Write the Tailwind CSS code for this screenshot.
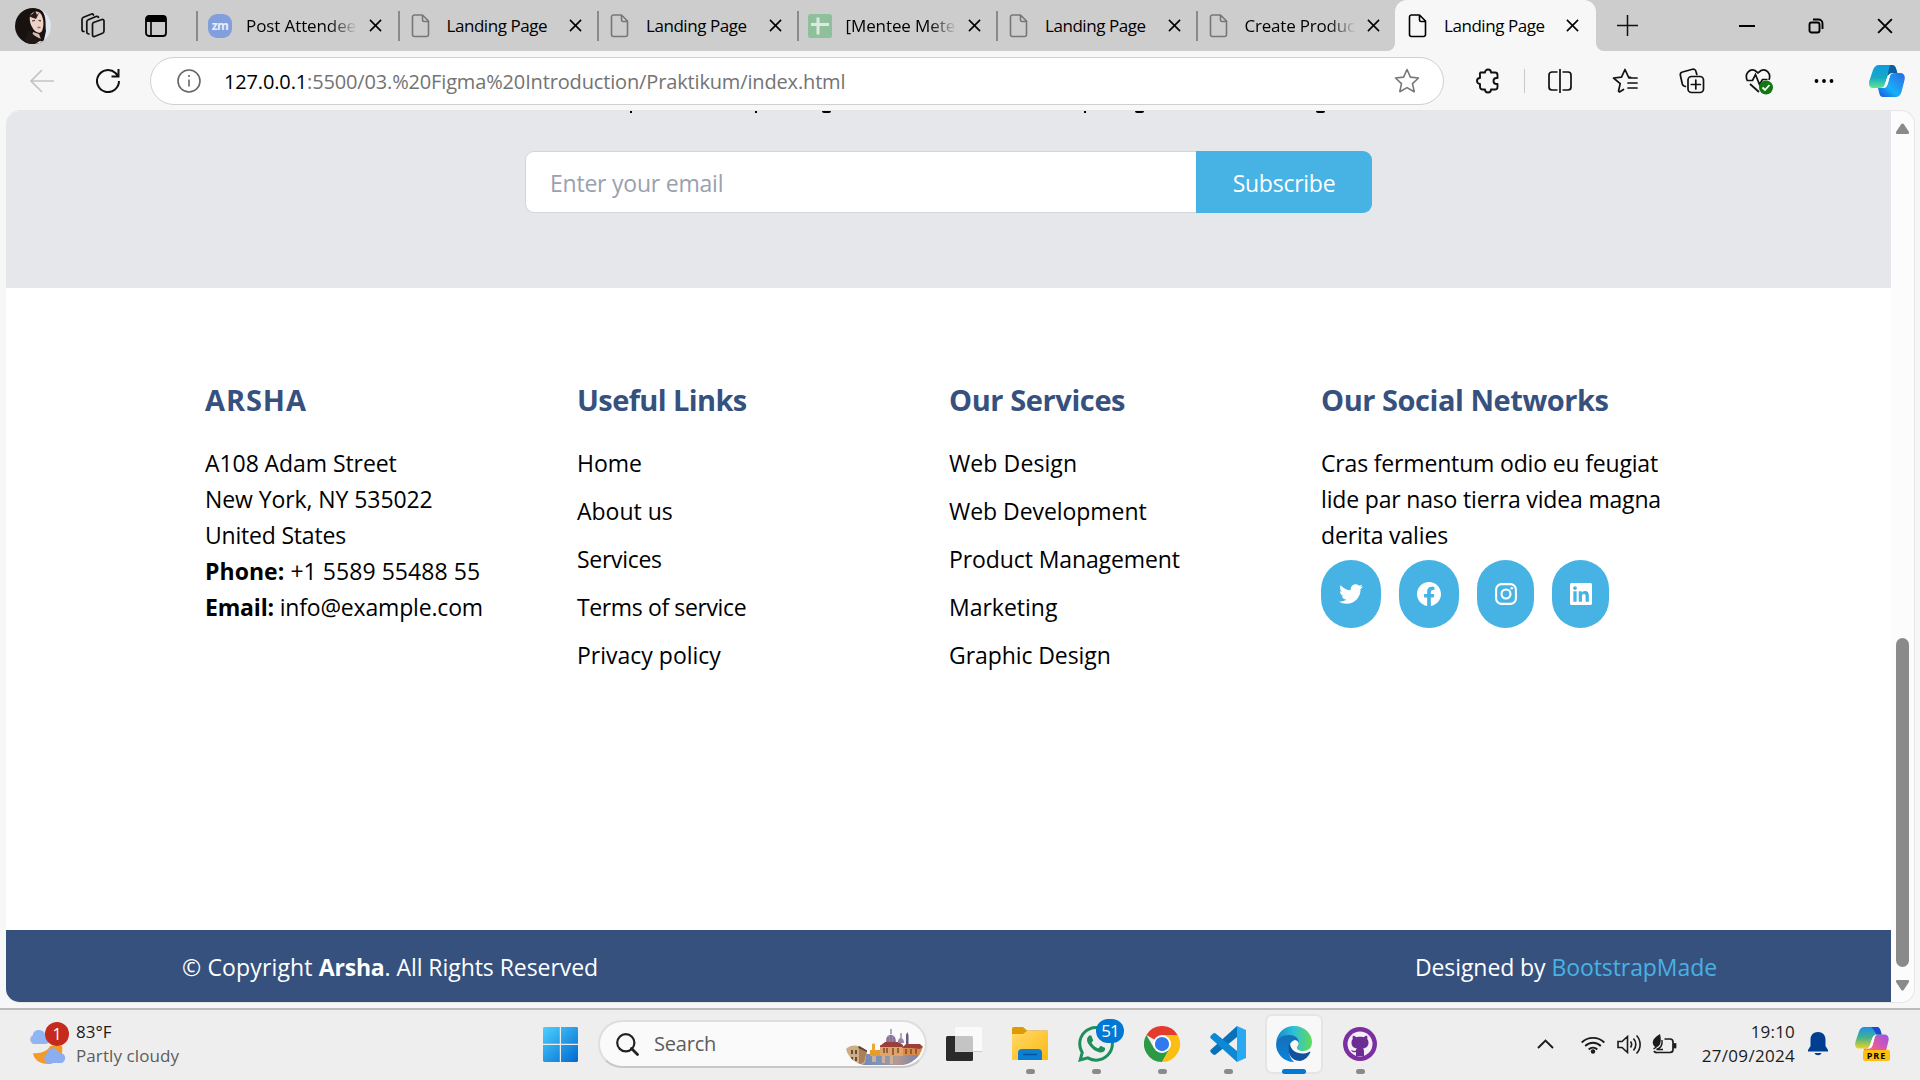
<!DOCTYPE html>
<html lang="en">
<head>
<meta charset="utf-8">
<title>Landing Page</title>
<script src="https://cdn.jsdelivr.net/npm/@tailwindcss/browser@4"></script>
</head>
<body class="w-[1920px] h-[1080px] overflow-hidden bg-[#f7f7f7] font-['Open_Sans','Noto_Sans',sans-serif] text-black flex flex-col">
<svg class="hidden">
  <symbol id="doc" viewBox="0 0 24 24"><path d="M5.500 1h8l6 6v13.500a2 2 0 0 1-2 2h-12a2 2 0 0 1-2-2v-17.500a2 2 0 0 1 2-2zM13.500 1v5a1.500 1.500 0 0 0 1.500 1.500h4.500" fill="none" stroke="currentColor" stroke-width="1.600" stroke-linejoin="round"/></symbol>
  <symbol id="x" viewBox="0 0 14 14"><path d="M1 1l12 12M13 1L1 13" fill="none" stroke="currentColor" stroke-width="1.700"/></symbol>
</svg>

<!-- Tab strip -->
<header class="h-[51px] shrink-0 bg-[#cdcdcd] flex items-stretch text-[17px] tracking-[-0.45px]">
  <div class="w-[196px] flex items-center pl-[15px] shrink-0">
    <svg class="w-9 h-9" viewBox="0 0 36 36"><defs><clipPath id="av"><circle cx="18" cy="18" r="18"/></clipPath></defs><g clip-path="url(#av)"><rect width="36" height="36" fill="#dfe5ed"/><path d="M0 36V10C5-1 20-3 27 3c5 6 3 14 4 20l-3 13z" fill="#17110f"/><path d="M15 8c2-5 8-6 11-2 3 5 3 12 1 17-2 3-5 2-8-1-3-4-5-9-4-14z" fill="#ecd3c8"/><path d="M13 8c4-1 6-3 7-6l2 5 3-4-4 8z" fill="#2a1d19"/><path d="M18 24l6 2 2 5-6 4h-5z" fill="#d9bcb0"/><path d="M14 22c4 5 8 8 14 9l-1 5H8z" fill="#211715"/><path d="M20 36l5-3 5 1v2z" fill="#eeeef0"/><path d="M17 13l3-.500M23.500 12.500l2.500.3" stroke="#4a2c27" stroke-width="1.200"/><path d="M22.500 19.500h3" stroke="#c4544f" stroke-width="1.500"/></g></svg>
    <svg class="w-[26px] h-[26px] ml-[29px]" viewBox="0 0 26 26" fill="none" stroke="#111" stroke-width="1.700" stroke-linejoin="round" stroke-linecap="round"><path d="M13.500 9.500l8.500-3a1.500 1.500 0 0 1 2 1.500v10a2.500 2.500 0 0 1-1.500 2.300l-8 3.200a1.500 1.500 0 0 1-2-1.500V11.500a2.200 2.200 0 0 1 1-2z"/><path d="M9 21a2 2 0 0 1-2.200-2V9a2.500 2.500 0 0 1 1.500-2.300L16 3.500a2 2 0 0 1 2.500.8M4 18.500a2 2 0 0 1-2-2V6.500A2.500 2.500 0 0 1 3.500 4.200L11 1.200a2 2 0 0 1 2.500.8"/></svg>
    <svg class="w-[22px] h-[22px] ml-[39px]" viewBox="0 0 22 22"><rect x="1" y="1" width="20" height="20" rx="3" fill="none" stroke="#000" stroke-width="1.800"/><path d="M1 7V4a3 3 0 0 1 3-3h14a3 3 0 0 1 3 3v3z"/><path d="M6 7v14" stroke="#000" stroke-width="1.600"/></svg>
  </div>

  <div class="w-[201.500px] shrink-0 flex items-center pr-[16px]"><i class="w-0.5 h-[30px] bg-[#8b8b8b]"></i><svg class="w-6 h-6 ml-[10px]" viewBox="0 0 24 24"><rect width="24" height="24" rx="9" fill="#829fdd"/><text x="12" y="15.500" text-anchor="middle" font-size="12" font-weight="700" fill="#e8eefb" font-family="Open Sans">zm</text></svg><span class="ml-[14px] w-[111px] tracking-[-0.1px] overflow-hidden whitespace-nowrap bg-gradient-to-r from-black from-75% to-transparent bg-clip-text text-transparent">Post Attendee</span><svg class="w-[13px] h-[13px] ml-auto"><use href="#x"/></svg></div>
  <div class="w-[199.500px] shrink-0 flex items-center pr-[15px]"><i class="w-0.5 h-[30px] bg-[#8b8b8b]"></i><svg class="w-6 h-6 ml-[9px] text-[#777]"><use href="#doc"/></svg><span class="ml-[14px] w-[111px] whitespace-nowrap">Landing Page</span><svg class="w-[13px] h-[13px] ml-auto"><use href="#x"/></svg></div>
  <div class="w-[199.500px] shrink-0 flex items-center pr-[15px]"><i class="w-0.5 h-[30px] bg-[#8b8b8b]"></i><svg class="w-6 h-6 ml-[9px] text-[#777]"><use href="#doc"/></svg><span class="ml-[14px] w-[111px] whitespace-nowrap">Landing Page</span><svg class="w-[13px] h-[13px] ml-auto"><use href="#x"/></svg></div>
  <div class="w-[199.500px] shrink-0 flex items-center pr-[15px]"><i class="w-0.5 h-[30px] bg-[#8b8b8b]"></i><svg class="w-6 h-6 ml-[9px]" viewBox="0 0 24 24"><rect width="24" height="24" rx="2.500" fill="#8fc09c"/><path d="M3 10.500h18M10 3.500v17" stroke="#dde8df" stroke-width="3"/></svg><span class="ml-[14px] w-[111px] tracking-[-0.1px] overflow-hidden whitespace-nowrap bg-gradient-to-r from-black from-75% to-transparent bg-clip-text text-transparent">[Mentee Mete</span><svg class="w-[13px] h-[13px] ml-auto"><use href="#x"/></svg></div>
  <div class="w-[199.500px] shrink-0 flex items-center pr-[15px]"><i class="w-0.5 h-[30px] bg-[#8b8b8b]"></i><svg class="w-6 h-6 ml-[9px] text-[#777]"><use href="#doc"/></svg><span class="ml-[14px] w-[111px] whitespace-nowrap">Landing Page</span><svg class="w-[13px] h-[13px] ml-auto"><use href="#x"/></svg></div>
  <div class="w-[199.500px] shrink-0 flex items-center pr-[15px]"><i class="w-0.5 h-[30px] bg-[#8b8b8b]"></i><svg class="w-6 h-6 ml-[9px] text-[#777]"><use href="#doc"/></svg><span class="ml-[14px] w-[111px] tracking-[-0.2px] overflow-hidden whitespace-nowrap bg-gradient-to-r from-black from-75% to-transparent bg-clip-text text-transparent">Create Produc</span><svg class="w-[13px] h-[13px] ml-auto"><use href="#x"/></svg></div>
  <div class="relative w-[201px] shrink-0 flex items-center pl-[11px] pr-[17px] bg-[#f7f7f7] rounded-t-[12px]">
    <svg class="absolute -left-2 bottom-0 w-2 h-2" viewBox="0 0 8 8"><path d="M8 0v8H0a8 8 0 0 0 8-8z" fill="#f7f7f7"/></svg>
    <svg class="absolute -right-2 bottom-0 w-2 h-2" viewBox="0 0 8 8"><path d="M0 0v8h8a8 8 0 0 1-8-8z" fill="#f7f7f7"/></svg>
    <svg class="w-6 h-6 text-black"><use href="#doc"/></svg><span class="ml-[14px] w-[111px] whitespace-nowrap">Landing Page</span><svg class="w-[13px] h-[13px] ml-auto"><use href="#x"/></svg></div>
  <svg class="w-[21px] h-[21px] ml-[21px] self-center" viewBox="0 0 21 21"><path d="M10.500 0v21M0 10.500h21" stroke="#111" stroke-width="1.500"/></svg>
  <div class="ml-auto flex items-center pr-[27px]">
    <i class="w-4 h-0.5 bg-black mr-[53px]"></i>
    <svg class="w-4 h-4 mr-[53px]" viewBox="0 0 16 16" fill="none" stroke="#000" stroke-width="1.900"><rect x="1.500" y="4.500" width="10" height="10" rx="2"/><path d="M5 1.500h5.500a4 4 0 0 1 4 4V11"/></svg>
    <svg class="w-4 h-4"><use href="#x"/></svg>
  </div>
</header>

<!-- Toolbar -->
<div class="h-[59px] shrink-0 flex items-center pt-[2px] pb-[1px]">
  <svg class="w-6 h-6 ml-[30px]" viewBox="0 0 24 24" fill="none" stroke="#c3c3c3" stroke-width="1.700"><path d="M24 12H1M12 1L1 12l11 11"/></svg>
  <svg class="w-6 h-6 ml-[42px]" viewBox="0 0 24 24" fill="none" stroke="#111" stroke-width="2"><path d="M23 12A11 11 0 1 1 19.500 4L22 7M22.500 0v7.500H15.500"/></svg>
  <div class="w-[1294px] h-12 ml-[30px] rounded-full border border-[#d0d0d0] bg-white flex items-center pl-[26px] pr-[23px]">
    <svg class="w-6 h-6" viewBox="0 0 24 24" fill="none" stroke="#666" stroke-width="1.600"><circle cx="12" cy="12" r="11"/><path d="M12 10.500v7M12 6v2"/></svg>
    <span class="ml-[23px] pt-px text-[20px] tracking-[-0.15px] text-[#737373] whitespace-nowrap"><span class="text-black">127.0.0.1</span>:5500/03.%20Figma%20Introduction/Praktikum/index.html</span>
    <svg class="w-[26px] h-[26px] ml-auto" viewBox="0 0 26 26" fill="none" stroke="#777" stroke-width="1.600" stroke-linejoin="round"><path d="M13 1.500l3.400 7.600 8.100.9-6 5.600 1.700 8.100L13 19.600l-7.200 4.100 1.700-8.100-6-5.600 8.100-.9z"/></svg>
  </div>
  <svg class="w-[26px] h-[26px] ml-[31px]" viewBox="0 0 26 26" fill="none" stroke="#111" stroke-width="1.900" stroke-linejoin="round"><path d="M5.500 4.500H10a3 3 0 1 1 6 0h4a2.500 2.500 0 0 1 2.500 2.500v3h-1a3 3 0 1 0 0 6h1v3a2.500 2.500 0 0 1-2.500 2.500h-4a3 3 0 1 1-6 0H7.500A2.500 2.500 0 0 1 5 19v-3a3 3 0 1 1 0-6V7a2.500 2.500 0 0 1 .5-2.500z"/></svg>
  <i class="w-px h-6 bg-[#c8c8c8] ml-[23px]"></i>
  <svg class="w-6 h-6 ml-[23px]" viewBox="0 0 24 24" fill="none" stroke="#111" stroke-width="1.700"><path d="M9.500 3H4a3 3 0 0 0-3 3v12a3 3 0 0 0 3 3h5.500M14.500 3H20a3 3 0 0 1 3 3v12a3 3 0 0 1-3 3h-5.500M12 0v24"/></svg>
  <svg class="w-[26px] h-[26px] ml-[40px]" viewBox="0 0 26 26" fill="none" stroke="#111" stroke-width="1.700" stroke-linejoin="round" stroke-linecap="round"><path d="M11.500 21.500L7.500 24l-1-.800 1.700-7.600-6.700-5.600 8-.9L13 1.500l3.500 7.600 2 .300M17 10h8M16 15h9M16 20h9"/></svg>
  <svg class="w-[26px] h-[26px] ml-[41px]" viewBox="0 0 26 26" fill="none" stroke="#111" stroke-width="1.700"><rect x="9" y="8.500" width="15.500" height="16" rx="3.500"/><path d="M16.800 12v9M12.300 16.500h9M6.500 18.500L5 18A3 3 0 0 1 3.300 16L1.300 7A2.800 2.800 0 0 1 3.500 4L13.500 1.300A2.800 2.800 0 0 1 17 3.500l.8 3" stroke-linecap="round"/></svg>
  <svg class="w-[28px] h-[28px] ml-[40px]" viewBox="0 0 28 28" fill="none" stroke="#111" stroke-width="1.700"><path d="M2 13C-.500 6 5 1.500 10 3.500l3 2.500 3-2.500c5-2 10.500 2.500 8 9.500M1.500 13.500h6l3-6 4 10 3-5h5M5 17l9 8"/><circle cx="21" cy="20.500" r="7" fill="#117811" stroke="none"/><path d="M17.500 20.500l2.500 2.500 4.500-5" stroke="#fff" stroke-width="1.800"/></svg>
  <svg class="w-[20px] h-[6px] ml-[41px]" viewBox="0 0 20 6"><circle cx="2.500" cy="3" r="1.900"/><circle cx="10" cy="3" r="1.900"/><circle cx="17.500" cy="3" r="1.900"/></svg>
  <svg class="w-9 h-8 ml-[35px]" viewBox="0 0 36 32"><defs><linearGradient id="cpa" x1="0" y1="0" x2="0" y2="1"><stop stop-color="#0e9be0"/><stop offset=".55" stop-color="#18a9c4"/><stop offset="1" stop-color="#5ee58e"/></linearGradient><linearGradient id="cpb" x1="1" y1="0" x2="0" y2="1"><stop stop-color="#2a6ae0"/><stop offset=".6" stop-color="#18b0fa"/><stop offset="1" stop-color="#1750d8"/></linearGradient></defs><path d="M26 8h5c4 0 5.500 3 4.500 7l-3 12c-1 3-3 5-6 5H14c-3 0-3.500-3-4-5l-1-4h5c3 0 4-2 5-5l2-7c.7-2 2-3 5-3z" fill="url(#cpb)"/><path d="M10 0h13c3 0 4 3 4.500 5l.8 3H23c-3 0-4 2-5 5l-2 6c-1 3-2 4-5 4H4c-3.500 0-4.500-3-3.700-7L4 5c1-3 3-5 6-5z" fill="url(#cpa)"/><path d="M21 0h2c3 0 4 3 4.500 5l.8 3H23c-2 0-3 1-4 3 0-4 1-8 2-11z" fill="#0d5f9e"/><path d="M21 9.500c-2 .5-2.500 2-3 3.500l-2 6c-1 3-2 4-4.500 4H14c3 0 4-2 5-5z" fill="#fff"/></svg>
</div>

<!-- Page viewport -->
<div class="h-[893px] ml-[6px] mr-[5px] shrink-0 flex rounded-[14px] overflow-hidden bg-[#fcfcfc] border-y border-r border-[#e6e6e6]">
  <main class="w-[1885px] flex flex-col bg-white text-[23px] leading-9">
    <section class="h-[177px] shrink-0 bg-[#e5e7eb] relative">
      <!-- Descenders of the line scrolled under the toolbar -->
      <i class="absolute left-[624px] top-0 w-[2px] h-[2px] bg-black"></i><i class="absolute left-[749px] top-0 w-[2px] h-[2px] bg-black"></i><i class="absolute left-[816px] top-0 w-[9px] h-[2px] rounded-b-full bg-black"></i><i class="absolute left-[1078px] top-0 w-[2px] h-[2px] bg-black"></i><i class="absolute left-[1129px] top-0 w-[9px] h-[2px] rounded-b-full bg-black"></i><i class="absolute left-[1310px] top-0 w-[9px] h-[2px] rounded-b-full bg-black"></i>
      <div class="flex h-full pt-[40px] pl-[519px] pb-[75px]">
        <div class="w-[671px] border border-r-0 border-gray-300 bg-white rounded-l-[9px] flex items-center pt-[2px] pl-6 text-gray-400"><span class="tracking-[-0.22px]">Enter your email</span></div>
        <div class="w-[176px] bg-[#47b2e4] rounded-r-[9px] flex items-center justify-center pt-[2px] text-white"><span class="tracking-[-0.25px]">Subscribe</span></div>
      </div>
    </section>
    <section class="grow grid grid-cols-[372px_372px_372px_372px] pl-[199px] pt-[91px]">
      <div><h3 class="text-[29px] leading-[42px] font-bold text-[#37517e] mb-6 tracking-[0.9px]">ARSHA</h3>
        <p class="tracking-[-0.07px]">A108 Adam Street</p><p class="tracking-[-0.08px]">New York, NY 535022</p><p class="tracking-[-0.2px]">United States</p><p class="tracking-[0.05px]"><b>Phone:</b> +1 5589 55488 55</p><p class="tracking-[-0.18px]"><b>Email:</b> info@example.com</p></div>
      <div><h3 class="text-[29px] leading-[42px] font-bold text-[#37517e] mb-6 tracking-[-0.6px]">Useful Links</h3>
        <ul class="flex flex-col gap-3"><li>Home</li><li>About us</li><li class="tracking-[-0.3px]">Services</li><li class="tracking-[-0.38px]">Terms of service</li><li>Privacy policy</li></ul></div>
      <div><h3 class="text-[29px] leading-[42px] font-bold text-[#37517e] mb-6 tracking-[-0.4px]">Our Services</h3>
        <ul class="flex flex-col gap-3"><li class="tracking-[0.1px]">Web Design</li><li class="tracking-[-0.05px]">Web Development</li><li class="tracking-[-0.1px]">Product Management</li><li>Marketing</li><li class="tracking-[-0.08px]">Graphic Design</li></ul></div>
      <div><h3 class="text-[29px] leading-[42px] font-bold text-[#37517e] mb-6 tracking-[-0.45px]">Our Social Networks</h3>
        <p class="tracking-[-0.17px]">Cras fermentum odio eu feugiat</p><p class="tracking-[-0.17px]">lide par naso tierra videa magna</p><p class="tracking-[-0.15px]">derita valies</p>
        <div class="flex gap-[18px] mt-[7px] text-white">
          <a class="w-[60px] h-[68px] rounded-full bg-[#47b2e4] flex items-center justify-center"><svg class="w-6 h-6" viewBox="0 0 512 512" fill="currentColor"><path d="M459.370 151.716c.325 4.548.325 9.097.325 13.645 0 138.720-105.583 298.558-298.558 298.558-59.452 0-114.680-17.219-161.137-47.106 8.447.974 16.568 1.299 25.340 1.299 49.055 0 94.213-16.568 130.274-44.832-46.132-.975-84.792-31.188-98.112-72.772 6.498.974 12.995 1.624 19.818 1.624 9.421 0 18.843-1.300 27.614-3.573-48.081-9.747-84.143-51.980-84.143-102.985v-1.299c13.969 7.797 30.214 12.670 47.431 13.319-28.264-18.843-46.781-51.005-46.781-87.391 0-19.492 5.197-37.360 14.294-52.954 51.655 63.675 129.300 105.258 216.365 109.807-1.624-7.797-2.599-15.918-2.599-24.040 0-57.828 46.782-104.934 104.934-104.934 30.213 0 57.502 12.670 76.670 33.137 23.715-4.548 46.456-13.320 66.599-25.340-7.798 24.366-24.366 44.833-46.132 57.827 21.117-2.273 41.584-8.122 60.426-16.243-14.292 20.791-32.161 39.308-52.628 54.253z"/></svg></a>
          <a class="w-[60px] h-[68px] rounded-full bg-[#47b2e4] flex items-center justify-center"><svg class="w-6 h-6" viewBox="0 0 24 24" fill="currentColor"><path d="M24 12.070C24 5.400 18.630 0 12 0S0 5.400 0 12.070C0 18.100 4.390 23.090 10.130 24v-8.440H7.080v-3.490h3.050V9.410c0-3.020 1.790-4.690 4.530-4.690 1.310 0 2.690.24 2.690.24v2.970h-1.520c-1.490 0-1.960.93-1.960 1.890v2.250h3.330l-.53 3.490h-2.800V24C19.610 23.090 24 18.100 24 12.070z"/></svg></a>
          <a class="w-[57px] h-[68px] rounded-full bg-[#47b2e4] flex items-center justify-center"><svg class="w-[22px] h-[22px]" viewBox="0 0 22 22" fill="none" stroke="currentColor" stroke-width="2.100"><rect x="1.100" y="1.100" width="19.800" height="19.800" rx="5.500"/><circle cx="11" cy="11" r="4.500"/><circle cx="16.800" cy="5.200" r="1.300" fill="currentColor" stroke="none"/></svg></a>
          <a class="w-[57px] h-[68px] rounded-full bg-[#47b2e4] flex items-center justify-center"><svg class="w-[22px] h-[22px]" viewBox="0 32 448 448" fill="currentColor"><path d="M416 32H31.900C14.300 32 0 46.500 0 64.300v383.400C0 465.500 14.300 480 31.900 480H416c17.600 0 32-14.500 32-32.300V64.300c0-17.800-14.400-32.300-32-32.300zM135.400 416H69V202.200h66.500V416zm-33.200-243c-21.300 0-38.500-17.300-38.500-38.500S80.900 96 102.200 96c21.200 0 38.500 17.300 38.500 38.500 0 21.300-17.200 38.500-38.500 38.500zm282.100 243h-66.400V312c0-24.800-.5-56.700-34.500-56.700-34.600 0-39.900 27-39.900 54.900V416h-66.400V202.200h63.700v29.200h.9c8.900-16.800 30.600-34.500 62.900-34.500 67.200 0 79.700 44.300 79.700 101.900V416z"/></svg></a>
        </div></div>
    </section>
    <footer class="h-[72px] shrink-0 bg-[#37517e] text-white flex items-center justify-between pl-[176px] pr-[174px] pt-[2px]">
      <p><span class="tracking-[0.15px]">© Copyright </span><b class="tracking-[-0.2px]">Arsha</b><span class="tracking-[-0.06px]">. All Rights Reserved</span></p>
      <p class="tracking-[-0.08px]">Designed by <span class="text-[#47b2e4]">BootstrapMade</span></p>
    </footer>
  </main>
  <div class="grow flex flex-col items-center pt-[12px] pb-[11px]">
    <svg class="w-[15px] h-[11px]" viewBox="0 0 15 11"><path d="M6.300 1q1.200-1 2.400 0l5.300 8q.5 2-1 2h-11q-1.500 0-1-2z" fill="#8a8a8a"/></svg>
    <i class="w-[13px] h-[329px] rounded-full bg-[#8a8a8a] mt-auto"></i>
    <svg class="w-[15px] h-[11px] mt-[13px]" viewBox="0 0 15 11"><path d="M6.300 10q1.200 1 2.400 0l5.300-8q.5-2-1-2h-11q-1.500 0-1 2z" fill="#8a8a8a"/></svg>
  </div>
</div>

<!-- Taskbar -->
<footer class="mt-auto h-[72px] shrink-0 border-t-2 border-[#bcbcbc] bg-[#eee] flex items-center pb-[2px] text-[17px] leading-6">
  <div class="w-[543px] flex items-center pl-[28px] shrink-0">
    <div class="relative w-[38px] h-[42px]">
      <svg class="w-[38px] h-[42px]" viewBox="0 0 38 42"><path d="M5 30c7 1 15-2 17-7h12c2 10-5 18-14 18C12 41 6 37 5 30z" fill="#f39a2b"/><path d="M5 21a5 5 0 0 1 0-9c0-6 10-7 12-1 6 0 7 9 1 10z" fill="#8fb5f2"/><path d="M19 40a5 5 0 0 1 0-9c0-7 11-8 12-1 8-1 8 10 1 10z" fill="#8aaef0"/></svg>
      <span class="absolute left-[17px] -top-[1px] w-6 h-6 rounded-full bg-[#c42b1c] text-white text-center text-[16px]">1</span>
    </div>
    <div class="ml-[10px] text-[#1b1b1b]"><p>83°F</p><p class="text-[#5c5c5c] tracking-[0.1px]">Partly cloudy</p></div>
  </div>
  <svg class="w-[35px] h-[35px]" viewBox="0 0 35 35"><defs><linearGradient id="wn" x1="0" y1="0" x2="1" y2="1"><stop stop-color="#4cd0ff"/><stop offset="1" stop-color="#0069cf"/></linearGradient></defs><path d="M1 0h15.800v16.800H0V1zM18 0h16l1 1v15.800H18zM0 18h16.800v17H1l-1-1zM18 18h17v16l-1 1H18z" fill="url(#wn)"/></svg>
  <div class="w-[329px] h-12 ml-[20px] rounded-full bg-[#fafafa] border-2 border-[#dedede] border-b-[#c8c8c8] flex items-center pl-[16px] pr-[2px] overflow-hidden">
    <svg class="w-[23px] h-[23px]" viewBox="0 0 23 23" fill="none" stroke="#222" stroke-width="2.200"><circle cx="9.800" cy="9.800" r="8.600"/><path d="M15.500 15.500l6 6" stroke-width="2.800" stroke-linecap="round"/></svg>
    <span class="ml-[15px] text-[20px] tracking-[-0.2px] text-[#5c5c5c]">Search</span>
    <svg class="w-[77px] h-[36px] ml-auto self-end mb-px" viewBox="0 0 77 36"><defs><clipPath id="ct"><path d="M0 20C3 16 10 16 14 17L22 22 26 12 34 16 40 0h24l2 11 11 4c0 9-8 19-20 21H18C8 34 2 28 0 20z"/></clipPath><linearGradient id="wt" x1="0" x2="1" y1="0" y2="0"><stop stop-color="#6f86b4"/><stop offset=".4" stop-color="#8296bb"/><stop offset=".6" stop-color="#b59a90"/><stop offset="1" stop-color="#6c7fae"/></linearGradient></defs><g clip-path="url(#ct)"><path d="M14 25h63v11H10z" fill="url(#wt)"/><path d="M36 26h3v8h-3zM44 26h3v9h-3zM26 27h4v6h-4z" fill="#cdb09a"/><path d="M0 14l14 3 7 5-2 12-4 2H0z" fill="#cfad84"/><path d="M13 18l8 4-3 11-5 3z" fill="#a98158"/><path d="M13 17l8 4v2l-9-4z" fill="#5f4534"/><path d="M24 21h11v6H24z" fill="#e39c33"/><path d="M26 15.500q1.500-2.500 3 0V22h-3z" fill="#eda535"/><path d="M34 16h23v11H34z" fill="#e0a466"/><path d="M57 17h20v9H57z" fill="#d98c4a"/><path d="M34 17l5-4h14l4 3v2H34zM56 19l4-4h14l3 3-3 2-9-1z" fill="#9b4038"/><path d="M40 13c-1-9 10-10 10 0z" fill="#9a86a9"/><path d="M42 13V8M45 13V6M48 13V8" stroke="#77628c"/><path d="M52 14c-1-6 6-7 6 0z" fill="#9a86a9"/><path d="M44.500 0h1v5h-1zM54.500 4h1v5h-1zM60 6l1.200-3 1.300 3v9H60z" fill="#665680"/><path d="M38 19v5M41 19v5M47 19v7M52 19v5M60 20v5M65 20v5M70 20v5" stroke="#7a4231" stroke-width="1.400"/><path d="M6 21v4M10 21v4M6 28v4M10 28v4" stroke="#66503c" stroke-width="2"/></g></svg>
  </div>
  <div class="flex items-center ml-[4px]">
    <div class="w-[66px] flex justify-center"><svg class="w-9 h-[34px]" viewBox="0 0 36 34"><rect y="9" width="27" height="25" rx="1.500" fill="#2b2b2b"/><rect x="9" y="0" width="27" height="25" rx="1.500" fill="#fff" fill-opacity=".72"/><path d="M9 24.500h27" stroke="#ccc"/></svg></div>
    <div class="w-[66px] h-[60px] relative flex items-center justify-center"><svg class="w-9 h-[34px]" viewBox="0 0 36 34"><defs><linearGradient id="fo" x1="0" y1="0" x2="1" y2="1"><stop stop-color="#ffd968"/><stop offset="1" stop-color="#fdb813"/></linearGradient></defs><path d="M0 1.500Q0 0 1.500 0H11l4 3.500h20q1 0 1 1V9H0z" fill="#dd9a05"/><path d="M0 7h11l4-3h21v29H0z" fill="url(#fo)"/><path d="M6 33v-7q0-4 4-4h16q4 0 4 4v7z" fill="#0d7fd3"/><path d="M11 27.500h14" stroke="#09529c" stroke-width="1.600"/></svg><i class="absolute bottom-0 w-[9px] h-[5px] rounded-full bg-[#8a8a8a]"></i></div>
    <div class="w-[66px] h-[60px] relative flex items-center justify-center"><svg class="w-9 h-9" viewBox="0 0 24 24" fill="#1d8f5b"><path d="M17.472 14.382c-.297-.149-1.758-.867-2.030-.967-.273-.099-.471-.148-.670.150-.197.297-.767.966-.940 1.164-.173.199-.347.223-.644.075-.297-.150-1.255-.463-2.390-1.475-.883-.788-1.480-1.761-1.653-2.059-.173-.297-.018-.458.130-.606.134-.133.298-.347.446-.520.149-.174.198-.298.298-.497.099-.198.050-.371-.025-.520-.075-.149-.669-1.612-.916-2.207-.242-.579-.487-.500-.669-.510-.173-.008-.371-.010-.570-.010-.198 0-.520.074-.792.372-.272.297-1.040 1.016-1.040 2.479 0 1.462 1.065 2.875 1.213 3.074.149.198 2.096 3.200 5.077 4.487.709.306 1.262.489 1.694.625.712.227 1.360.195 1.871.118.571-.085 1.758-.719 2.006-1.413.248-.694.248-1.289.173-1.413-.074-.124-.272-.198-.570-.347m-5.421 7.403h-.004a9.870 9.870 0 01-5.031-1.378l-.361-.214-3.741.982.998-3.648-.235-.374a9.860 9.860 0 01-1.510-5.260c.001-5.450 4.436-9.884 9.888-9.884 2.640 0 5.122 1.030 6.988 2.898a9.825 9.825 0 012.893 6.994c-.003 5.450-4.437 9.884-9.885 9.884m8.413-18.297A11.815 11.815 0 0012.050 0C5.495 0 .160 5.335.157 11.892c0 2.096.547 4.142 1.588 5.945L.057 24l6.305-1.654a11.882 11.882 0 005.683 1.448h.005c6.554 0 11.890-5.335 11.893-11.893a11.821 11.821 0 00-3.480-8.413z"/></svg><span class="absolute left-[33px] top-[5px] w-7 h-6 rounded-full bg-[#0078d4] text-white text-[17px] text-center tracking-[-1px]">51</span><i class="absolute bottom-0 w-[9px] h-[5px] rounded-full bg-[#8a8a8a]"></i></div>
    <div class="w-[66px] h-[60px] relative flex items-center justify-center"><svg class="w-9 h-9" viewBox="0 0 48 48"><path d="M24 24L3.200 12A24 24 0 0 1 44.800 12z" fill="#e33b2e"/><path d="M3.200 12A24 24 0 0 0 24 48l10.400-18L24 24 13.600 30z" fill="#2c9a45"/><path d="M44.800 12A24 24 0 0 1 24 48l10.400-18V12z" fill="#fbbf12"/><path d="M24 12h20.800L34.400 30z" fill="#fbbf12"/><circle cx="24" cy="24" r="12" fill="#fff"/><circle cx="24" cy="24" r="9.500" fill="#3079ee"/></svg><i class="absolute bottom-0 w-[9px] h-[5px] rounded-full bg-[#8a8a8a]"></i></div>
    <div class="w-[66px] h-[60px] relative flex items-center justify-center"><svg class="w-9 h-9" viewBox="0 0 36 36"><path d="M27 0L1 23.500q-1.500 1.500 0 3l2.200 2q1.200.800 2.500 0L27 11z" fill="#0a70b8"/><path d="M27 36L1 12.500q-1.500-1.500 0-3l2.200-2q1.200-.800 2.500 0L27 25z" fill="#0d88d4"/><path d="M27 0l9 4v28l-9 4z" fill="#29a9f2"/></svg><i class="absolute bottom-0 w-[9px] h-[5px] rounded-full bg-[#8a8a8a]"></i></div>
    <div class="w-[66px] h-[60px] relative flex items-center justify-center"><div class="w-[58px] h-[60px] rounded-[7px] bg-[#f8f8f8] border-2 border-[#e5e5e5] flex items-center justify-center"><svg class="w-9 h-9" viewBox="0 0 36 36"><defs><linearGradient id="ea" x1="0" y1="0" x2="1" y2="0"><stop stop-color="#1487d0"/><stop offset=".5" stop-color="#2fc0d8"/><stop offset="1" stop-color="#61dd55"/></linearGradient><linearGradient id="eb" x1="0" y1="0" x2="0" y2="1"><stop stop-color="#156fb5"/><stop offset="1" stop-color="#0b84dc"/></linearGradient></defs><path d="M0 17C1 7 8 0 18 0c11 0 18 8 18 16 0 6-4 9-9 9-4 0-7-2-6-4 4-5 0-11-7-11C7 10 2 13 0 17z" fill="url(#ea)"/><path d="M0 18c1-6 7-9 13-9s10 3 10 8c-1-2-3-3-4-3-8 2-8 15-1 22C8 36 0 28 0 18z" fill="url(#eb)"/><path d="M14 17c-4 7 0 18 10 18 5-1 8-4 10-8 1-1 0-1.500-1-1-8 4-19 0-19-9z" fill="#11529e"/></svg></div><i class="absolute bottom-0 w-6 h-[5px] rounded-full bg-[#0078d4]"></i></div>
    <div class="w-[66px] h-[60px] relative flex items-center justify-center"><svg class="w-[34px] h-[34px]" viewBox="0 0 34 34"><circle cx="17" cy="17" r="17" fill="#7b2fa0"/><circle cx="17" cy="17" r="12.500" fill="#f4eef7"/><path d="M13 29v-4c-3 1-4.500-.500-5-2 2 .500 2.500 1.500 5 .500 0-1 .5-1.500 1-2-4-.500-5.500-3-5.500-6 0-1.500.5-2.700 1.300-3.600-.3-1-.3-2 .2-3.200 1.200 0 2.500.7 3.500 1.500 2-.5 5-.5 7 0 1-.8 2.300-1.500 3.500-1.500.5 1.200.5 2.200.2 3.200.8.900 1.300 2.100 1.300 3.600 0 3-1.500 5.500-5.500 6 .7.700 1 1.500 1 2.500v5z" fill="#6d2c94"/></svg><i class="absolute bottom-0 w-[9px] h-[5px] rounded-full bg-[#8a8a8a]"></i></div>
  </div>
  <div class="ml-auto flex items-center pr-[29px]">
    <svg class="w-[17px] h-[10px]" viewBox="0 0 17 10" fill="none" stroke="#1b1b1b" stroke-width="1.900"><path d="M1 9l7.500-7.500L16 9"/></svg>
    <svg class="w-6 h-[19px] ml-[27px]" viewBox="0 0 24 19" fill="none" stroke="#1b1b1b" stroke-width="1.800"><path d="M.700 7.500a16 16 0 0 1 22.600 0M4.200 11a11 11 0 0 1 15.600 0M7.700 14.500a6 6 0 0 1 8.600 0"/><circle cx="12" cy="16.500" r="2.200" fill="#1b1b1b" stroke="none"/></svg>
    <svg class="w-[25px] h-[21px] ml-[12px]" viewBox="0 0 25 21" fill="none" stroke="#1b1b1b" stroke-width="1.600"><path d="M1 7.500h4L10.500 2.500v16L5 13.500H1zM13.500 7.500a5 5 0 0 1 0 6M16.500 4.500a9 9 0 0 1 0 12M19.500 1.500a13 13 0 0 1 0 18"/></svg>
    <svg class="w-[25px] h-[20px] ml-[10px]" viewBox="0 0 25 20" fill="none" stroke="#1b1b1b" stroke-width="1.700"><path d="M12.500 5H18a3 3 0 0 1 3 3v7.500a3 3 0 0 1-3 3H5a3 3 0 0 1-3-1.500"/><path d="M22 10h1.500v3.500H22z" fill="#1b1b1b"/><path d="M8 0C3 3 0 6 1 10c.3 1.500 1.500 3 3 3 4 0 6-5 4-13z" fill="#1b1b1b" stroke="none"/><path d="M10 6c.5 4-1 8-5.500 9.500H11M7 5c0 4-2 8-5.500 10" stroke-width="1.400"/></svg>
    <div class="w-[118px] text-right text-[#1b1b1b] whitespace-nowrap"><p class="tracking-[0.2px]">19:10</p><p class="tracking-[0.3px]">27/09/2024</p></div>
    <svg class="w-5 h-[24px] ml-[13px]" viewBox="0 0 20 24" fill="#003e92"><path d="M10 0c4.500 0 7.500 3 7.500 7.500V14l2.500 4v1.500H0V18l2.500-4V7.500C2.500 3 5.500 0 10 0zM6.500 21h7c-1 3-6 3-7 0z"/></svg>
    <div class="relative w-[36px] h-[34px] ml-[27px]"><svg class="w-[34px] h-[30px]" viewBox="0 0 36 32"><defs><linearGradient id="ca" x1="0" y1="0" x2="0" y2="1"><stop stop-color="#1b8ff0"/><stop offset=".5" stop-color="#46b28a"/><stop offset="1" stop-color="#f0d31f"/></linearGradient><linearGradient id="cb" x1="1" y1="0" x2="0" y2="1"><stop stop-color="#9a52e8"/><stop offset=".6" stop-color="#ee5c95"/><stop offset="1" stop-color="#ff9a4d"/></linearGradient></defs><path d="M26 8h5c4 0 5.500 3 4.500 7l-3 12c-1 3-3 5-6 5H14c-3 0-3.500-3-4-5l-1-4h5c3 0 4-2 5-5l2-7c.7-2 2-3 5-3z" fill="url(#cb)"/><path d="M10 0h13c3 0 4 3 4.500 5l.8 3H23c-3 0-4 2-5 5l-2 6c-1 3-2 4-5 4H4c-3.500 0-4.500-3-3.700-7L4 5c1-3 3-5 6-5z" fill="url(#ca)"/><path d="M17 0h6c3 0 4 3 4.500 5l.8 3H23c-2-2-3-6-6-8z" fill="#1a48cf"/><path d="M21 9.500c-2 .5-2.500 2-3 3.500l-2 6c-1 3-2 4-4.500 4H14c3 0 4-2 5-5z" fill="#fff"/></svg><span class="absolute left-[8px] top-[23px] w-[27px] h-[11px] rounded-[2px] bg-[#fdc00f] text-black font-bold text-[9px] leading-[11px] text-center tracking-[1px]">PRE</span></div>
  </div>
</footer>
</body>
</html>
